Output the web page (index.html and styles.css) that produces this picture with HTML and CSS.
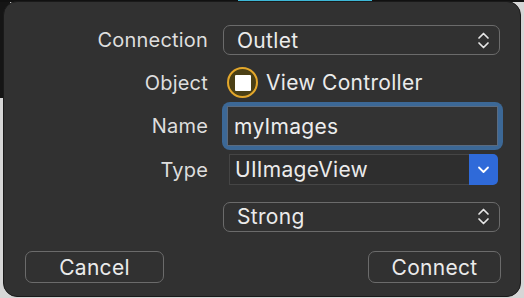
FILE: index.html
```html
<!DOCTYPE html>
<html lang="en">
<head>
  <meta charset="UTF-8">
  <meta name="viewport" content="width=device-width, initial-scale=1">
  <title>Connection</title>
  <link rel="stylesheet" href="styles.css">
</head>
<body>
  <div class="sheet">
    <div class="row row-connection">
      <label class="label">Connection</label>
      <div class="popup">
        <span>Outlet</span>
        <svg class="updown" width="13" height="19" viewBox="0 0 13 19"><polyline points="2,7 6.5,2.5 11,7"/><polyline points="2,12 6.5,16.5 11,12"/></svg>
      </div>
    </div>

    <div class="row row-object">
      <label class="label">Object</label>
      <div class="object">
        <span class="vc-icon"><span class="vc-square"></span></span>
        <span>View Controller</span>
      </div>
    </div>

    <div class="row row-name">
      <label class="label">Name</label>
      <div class="focus-ring">
        <div class="field">myImages</div>
      </div>
    </div>

    <div class="row row-type">
      <label class="label">Type</label>
      <div class="combo">
        <div class="combo-text">UIImageView</div>
        <div class="combo-btn">
          <svg width="13" height="8" viewBox="0 0 13 8"><polyline points="2,1.5 6.5,6 11,1.5"/></svg>
        </div>
      </div>
    </div>

    <div class="row row-storage">
      <span class="label"></span>
      <div class="popup">
        <span>Strong</span>
        <svg class="updown" width="13" height="19" viewBox="0 0 13 19"><polyline points="2,7 6.5,2.5 11,7"/><polyline points="2,12 6.5,16.5 11,12"/></svg>
      </div>
    </div>

    <div class="buttons">
      <button class="btn btn-cancel">Cancel</button>
      <button class="btn btn-connect">Connect</button>
    </div>
  </div>
</body>
</html>
```

FILE: styles.css
```css
html, body { margin: 0; padding: 0; }
body {
  width: 524px; height: 298px; overflow: hidden;
  font-family: Inter, "Noto Sans", sans-serif;
  background:
    linear-gradient(to right, #111 0 238px, #3db7d6 238px 372px, #111 372px) no-repeat 0 0 / 100% 2px,
    linear-gradient(#151515, #151515) no-repeat 0 0 / 10px 98px,
    #d6d6d6;
}
.sheet {
  box-sizing: border-box;
  margin: 1px 0 0 3px;
  width: 518px; height: 296px;
  padding: 23px 20px 0 21px;
  background: #313131;
  border: 1px solid #1a1a1a;
  border-radius: 14px;
  display: flex; flex-direction: column;
  color: #ebebeb;
  font-size: 21px;
  letter-spacing: 0.3px;
  line-height: 1;
}
.row { display: flex; align-items: center; gap: 15px; }
.label { width: 183px; flex: none; text-align: right; color: #dedede; font-size: 20px; letter-spacing: 0.2px; }

.row-connection { height: 30px; }
.row-object { height: 31px; margin-top: 12px; }
.row-name { height: 48px; margin-top: 4px; gap: 14px; }
.row-type { height: 31px; margin-top: 4px; gap: 21px; }
.row-storage { height: 31px; margin-top: 16px; }

.popup {
  box-sizing: border-box;
  flex: 1; height: 30px;
  display: flex; align-items: center; justify-content: space-between;
  padding: 0 9px 0 13px;
  border: 1.5px solid #6b6b6b;
  border-radius: 7px;
}
.updown { fill: none; stroke: #e6e6e6; stroke-width: 1.7; stroke-linecap: round; stroke-linejoin: round; }

.object { display: flex; align-items: center; gap: 8px; margin-left: 4px; }
.vc-icon {
  box-sizing: border-box;
  width: 31px; height: 31px;
  border-radius: 50%;
  border: 2px solid #e3a72b;
  background: #4b4016;
  display: flex; align-items: center; justify-content: center;
}
.vc-square { width: 16px; height: 16px; background: #fff; border-radius: 1px; }

.focus-ring {
  box-sizing: border-box;
  flex: 1; height: 48px; margin-right: -3px;
  padding: 4px 5px;
  background: #3c6896;
  border-radius: 8px;
}
.field {
  box-sizing: border-box;
  height: 100%;
  padding: 0 6px;
  display: flex; align-items: center;
  background: #333;
  border: 1px solid #5a6b80;
  color: #ededed;
}

.combo { flex: 1; height: 31px; display: flex; margin-right: 2px; }
.combo-text {
  box-sizing: border-box;
  flex: 1;
  padding: 0 5px;
  display: flex; align-items: center;
  background: #2e2e2e;
  border: 1px solid #454545;
  border-right: none;
}
.combo-btn {
  width: 29px;
  display: flex; align-items: center; justify-content: center;
  background: #2f6ad9;
  border-radius: 0 5px 5px 0;
}
.combo-btn svg { fill: none; stroke: #fff; stroke-width: 1.8; stroke-linecap: round; stroke-linejoin: round; }

.buttons { display: flex; justify-content: space-between; margin-top: 19px; }
.btn {
  box-sizing: border-box;
  height: 32px;
  background: transparent;
  color: #ebebeb;
  font: inherit;
  letter-spacing: inherit;
  border: 1.5px solid #6b6b6b;
  border-radius: 7px;
  padding: 0;
}
.btn-cancel { width: 139px; }
.btn-connect { width: 133px; margin-right: -1px; }
```
